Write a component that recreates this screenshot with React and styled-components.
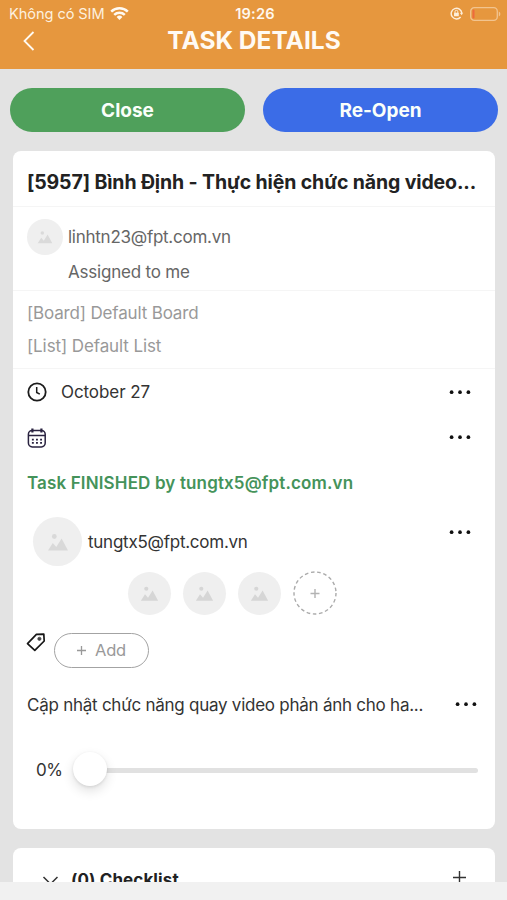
import React from 'react';
import styled, { createGlobalStyle } from 'styled-components'


const App = () => {
return <>
        <GlobalStyle />
        <Screen>
            <Header>
                <StatusBar>
                    <Carrier>
                        <Label $size={14.6} $color="#fdf0df" $spacing={-0.08}>Không có SIM</Label>
                        <WifiIcon />
                    </Carrier>
                    <Label $size={14.6} $weight={600} $color="#fff8ee" $spacing={0.2}>19:26</Label>
                    <StatusRight>
                        <LockIcon />
                        <BatteryIcon />
                    </StatusRight>
                </StatusBar>
                <NavBar>
                    <BackIcon />
                    <Label as="h1" $size={24.5} $weight={700} $color="#fffaf3">TASK DETAILS</Label>
                </NavBar>
            </Header>
            <Content>
                <Actions>
                    <ActionButton $color="#4fa05b">Close</ActionButton>
                    <ActionButton $color="#3b6ce7">Re-Open</ActionButton>
                </Actions>
                <Card $height={678}>
                    <TitleRow>
                        <Label as="h2" $size={19.5} $weight={700} $color="#222" $spacing={-0.12}>[5957] Bình Định - Thực hiện chức năng video...</Label>
                    </TitleRow>
                    <Reporter>
                        <Avatar $size={36}><PictureIcon size={16} color="#dadada" /></Avatar>
                        <ReporterText>
                            <Label $size={17} $color="#666" $spacing={-0.26}>linhtn23@fpt.com.vn</Label>
                            <Label $size={17} $color="#666" $spacing={-0.2}>Assigned to me</Label>
                        </ReporterText>
                    </Reporter>
                    <Location>
                        <Label $size={17} $color="#999" $spacing={-0.16}>[Board] Default Board</Label>
                        <Label $size={17} $color="#999" $spacing={-0.1}>[List] Default List</Label>
                    </Location>
                    <Row $height={46}>
                        <ClockIcon />
                        <Grow $left={14}><Label $size={17} $spacing={-0.08}>October 27</Label></Grow>
                        <MoreIcon />
                    </Row>
                    <Row $height={45}>
                        <CalendarIcon />
                        <Grow />
                        <MoreIcon />
                    </Row>
                    <Row $height={45} $top={2}>
                        <Label $size={17} $weight={600} $color="#45935a" $spacing={0.14}>Task FINISHED by tungtx5@fpt.com.vn</Label>
                    </Row>
                    <Assignee>
                        <Avatar $size={49}><PictureIcon size={22} color="#d9d9d9" /></Avatar>
                        <Grow $left={6} $top={2}><Label $size={17} $spacing={-0.25}>tungtx5@fpt.com.vn</Label></Grow>
                        <RaisedMore><MoreIcon /></RaisedMore>
                    </Assignee>
                    <Followers>
                        {[1, 2, 3].map(i => <Avatar key={i} $size={43}><PictureIcon size={19} color="#d6d6d6" /></Avatar>)}
                        <AddFollower />
                    </Followers>
                    <Tags>
                        <TagIcon />
                        <AddButton>
                            <PlusIcon size={9} color="#999" width={1.3} />
                            <Label $size={16.5} $color="#999" $spacing={-0.2}>Add</Label>
                        </AddButton>
                    </Tags>
                    <Description>
                        <Grow $top={2}><Label $size={17} $spacing={-0.25}>Cập nhật chức năng quay video phản ánh cho ha...</Label></Grow>
                        <MoreIcon />
                    </Description>
                    <Progress>
                        <Label $size={17} $spacing={-0.4}>0%</Label>
                        <Thumb />
                        <Track />
                    </Progress>
                </Card>
                <Card $height={80}>
                    <Checklist>
                        <ChevronIcon />
                        <Grow $left={13}><Label $size={17} $weight={700} $color="#222" $spacing={0.1}>(0) Checklist</Label></Grow>
                        <RaisedPlus><PlusIcon size={13} color="#333" width={1.4} /></RaisedPlus>
                    </Checklist>
                </Card>
            </Content>
            <BottomBar />
        </Screen>
    </>
}

export default App

const WifiIcon = () => (
    <svg width="19" height="14" viewBox="0 0 19 14" fill="none" stroke="#fffaf2" strokeWidth="2.5">
        <path d="M1.2 4.7A12 12 0 0 1 17.8 4.7" />
        <path d="M4.2 7.8A7.7 7.7 0 0 1 14.8 7.8" />
        <path d="M9.5 12.9L6.6 10A4.2 4.2 0 0 1 12.4 10Z" fill="#fffaf2" stroke="none" />
    </svg>
)

const LockIcon = () => (
    <svg width="13" height="13" viewBox="0 0 13 13" fill="none" stroke="#fdeedb" strokeWidth="1.5">
        <path d="M10.6 10A5.3 5.3 0 1 1 11.8 6.2" />
        <path d="M9.9 6L11.8 8.2L13 5.7Z" fill="#fdeedb" stroke="none" />
        <rect x="4" y="5.7" width="4.8" height="3.5" rx="0.5" fill="#fdeedb" stroke="none" />
        <path d="M5 6V4.7a1.4 1.4 0 0 1 2.8 0V6" strokeWidth="1" />
    </svg>
)

const BatteryIcon = () => (
    <svg width="31" height="14" viewBox="0 0 31 14">
        <rect x="0.7" y="0.7" width="26.6" height="12.6" rx="3.6" fill="none" stroke="#f2c48f" strokeWidth="1.3" />
        <rect x="2.5" y="2.5" width="2" height="9" rx="1" fill="#ee6a3c" />
        <path d="M28.8 4.6a2.6 2.6 0 0 1 0 4.8Z" fill="#f2c48f" />
    </svg>
)

const BackIcon = () => (
    <BackSvg width="12" height="20" viewBox="0 0 12 20" fill="none" stroke="#fffaf2" strokeWidth="1.8">
        <path d="M10.5 1L1.5 10L10.5 19" />
    </BackSvg>
)

const PictureIcon = ({ size, color }) => (
    <svg width={size} height={size} viewBox="0 0 22 22" fill={color}>
        <circle cx="7.3" cy="5.5" r="2.4" />
        <path d="M1 19.5L5.8 12L9.3 16L14.6 7.5L21 19.5Z" />
    </svg>
)

const ClockIcon = () => (
    <svg width="20" height="20" viewBox="0 0 20 20" fill="none" stroke="#1c1c1c" strokeWidth="1.8">
        <circle cx="10" cy="10" r="8.7" />
        <path d="M9.7 5V10.5L12.8 12.2" strokeWidth="1.5" />
    </svg>
)

const CalendarIcon = () => (
    <svg width="20" height="20" viewBox="0 0 20 20" fill="none" stroke="#2a2340" strokeWidth="1.5">
        <rect x="1.4" y="2.5" width="16.8" height="16.4" rx="3.8" />
        <path d="M1.7 7.5H18.3" />
        <path d="M5.4 0.6V4.4M14.4 0.6V4.4" strokeWidth="2.2" />
        <path d="M4.9 11.6H15.4M4.9 14.8H15.4" strokeWidth="1.7" strokeDasharray="1.9 2.2" />
    </svg>
)

const MoreIcon = () => (
    <svg width="22" height="5" viewBox="0 0 22 5" fill="#111">
        <circle cx="2.6" cy="2.2" r="1.85" />
        <circle cx="11" cy="2.2" r="1.85" />
        <circle cx="19.4" cy="2.2" r="1.85" />
    </svg>
)

const TagIcon = () => (
    <svg width="20" height="20" viewBox="0 0 20 20" fill="none" stroke="#161616" strokeWidth="1.7" strokeLinejoin="round">
        <path d="M1.5 11.6L10.4 2.4L17.8 2.1L18.2 9L8.8 18.4Z" />
        <circle cx="13.4" cy="6.8" r="1.6" fill="#444" stroke="#444" strokeWidth="0.8" />
    </svg>
)

const PlusIcon = ({ size, color, width }) => (
    <svg width={size} height={size} viewBox={`0 0 ${size} ${size}`} stroke={color} strokeWidth={width}>
        <path d={`M${size / 2} 0V${size}M0 ${size / 2}H${size}`} />
    </svg>
)

const AddFollower = () => (
    <svg width="44" height="44" viewBox="0 0 44 44" fill="none" stroke="#aaa" strokeWidth="1.4">
        <circle cx="22" cy="22" r="21" strokeDasharray="3.6 2.68" />
        <path d="M22 18V27M17.5 22.5H26.5" stroke="#b3b3b3" />
    </svg>
)

const ChevronIcon = () => (
    <svg width="16" height="10" viewBox="0 0 16 10" fill="none" stroke="#333" strokeWidth="1.5">
        <path d="M1.5 2L8.5 9L15.5 2" />
    </svg>
)

const GlobalStyle = createGlobalStyle`
    body {
        margin: 0;
        font-family: Inter, "Liberation Sans", sans-serif;
    }
`;

const Screen = styled.div`
    display: flex;
    flex-direction: column;
    width: 507px;
    height: 900px;
    overflow: hidden;
    background-color: #e3e3e3;
`;

const Label = styled.span`
    margin: 0;
    font-size: ${props => props.$size}px;
    font-weight: ${props => props.$weight || 400};
    color: ${props => props.$color || '#333'};
    letter-spacing: ${props => props.$spacing || 0}px;
    line-height: 1.3;
    white-space: nowrap;
`;

const Header = styled.header`
    flex: none;
    height: 69px;
    background-color: #e6973e;
`;

const StatusBar = styled.div`
    display: grid;
    grid-template-columns: 1fr auto 1fr;
    align-items: center;
    height: 28px;
    padding: 0 6px 0 9px;
`;

const Carrier = styled.div`
    display: flex;
    align-items: center;
    gap: 5px;
`;

const StatusRight = styled.div`
    display: flex;
    align-items: center;
    justify-content: flex-end;
    gap: 7px;
    padding-bottom: 1px;
`;

const NavBar = styled.div`
    display: grid;
    grid-template-columns: 1fr auto 1fr;
    align-items: center;
    align-content: center;
    height: 26px;
    padding: 0 22px 0 23px;
`;

const BackSvg = styled.svg`
    display: block;
`;

const Content = styled.main`
    flex: 1;
    min-height: 0;
    overflow: hidden;
    padding: 0 12px 0 13px;
`;

const Actions = styled.div`
    display: flex;
    gap: 18px;
    margin: 19px -3px;
`;

const ActionButton = styled.button`
    flex: 1;
    height: 44px;
    padding: 0;
    border: none;
    border-radius: 22px;
    background-color: ${props => props.$color};
    color: #fafffa;
    font-family: inherit;
    font-size: 19px;
    font-weight: 700;
`;

const Card = styled.section`
    box-sizing: border-box;
    height: ${props => props.$height}px;
    margin-bottom: 19px;
    border-radius: 8px;
    background-color: #fff;
`;

const TitleRow = styled.div`
    box-sizing: border-box;
    display: flex;
    align-items: center;
    height: 56px;
    padding: 8px 14px 0;
    border-bottom: 1px solid #f5f5f5;
`;

const Avatar = styled.div`
    display: flex;
    flex: none;
    align-items: center;
    justify-content: center;
    width: ${props => props.$size}px;
    height: ${props => props.$size}px;
    border-radius: 50%;
    background-color: #efefef;
`;

const Reporter = styled.div`
    box-sizing: border-box;
    display: flex;
    gap: 5px;
    height: 84px;
    padding: 12px 14px 0;
    border-bottom: 1px solid #f5f5f5;
`;

const ReporterText = styled.div`
    display: flex;
    flex-direction: column;
    gap: 13px;
    padding-top: 7px;
`;

const Location = styled.div`
    box-sizing: border-box;
    display: flex;
    flex-direction: column;
    gap: 11px;
    height: 78px;
    padding: 11px 14px 0;
    border-bottom: 1px solid #f5f5f5;
`;

const Row = styled.div`
    box-sizing: border-box;
    display: flex;
    align-items: center;
    height: ${props => props.$height}px;
    padding: ${props => props.$top || 0}px 24px 0 14px;
`;

const Grow = styled.div`
    flex: 1;
    padding-top: ${props => props.$top || 0}px;
    padding-left: ${props => props.$left || 0}px;
`;

const Assignee = styled.div`
    display: flex;
    align-items: center;
    height: 49px;
    padding: 12px 24px 0 20px;
`;

const RaisedMore = styled.div`
    display: flex;
    padding-bottom: 18px;
`;

const Followers = styled.div`
    display: flex;
    align-items: center;
    gap: 12px;
    height: 44px;
    padding: 5px 0 0 115px;
`;

const Tags = styled.div`
    display: flex;
    gap: 8px;
    height: 35px;
    padding: 17px 0 0 13px;
`;

const AddButton = styled.button`
    box-sizing: border-box;
    display: flex;
    align-items: center;
    justify-content: center;
    gap: 9px;
    width: 95px;
    height: 35px;
    margin-top: 1px;
    padding: 0;
    border: 1.5px solid #a3a3a3;
    border-radius: 18px;
    background: none;
    font-family: inherit;
`;

const Description = styled.div`
    display: flex;
    align-items: center;
    height: 75px;
    padding: 0 18px 0 14px;
`;

const Progress = styled.div`
    display: flex;
    align-items: center;
    height: 56px;
    padding: 0 17px 0 23px;
`;

const Thumb = styled.div`
    flex: none;
    z-index: 1;
    width: 34px;
    height: 34px;
    margin: 0 0 2px 10px;
    border-radius: 50%;
    background-color: #fff;
    box-shadow: 0 5px 12px rgba(0, 0, 0, 0.12), 0 1px 3px rgba(0, 0, 0, 0.1);
`;

const Track = styled.div`
    flex: 1;
    height: 5px;
    margin-left: -4px;
    border-radius: 3px;
    background-color: #e1e1e1;
`;

const Checklist = styled.div`
    display: flex;
    align-items: center;
    height: 64px;
    padding: 0 29px;
`;

const RaisedPlus = styled.div`
    display: flex;
    padding-bottom: 6px;
`;

const BottomBar = styled.footer`
    flex: none;
    height: 18px;
    background-color: #f1f1f1;
`;
